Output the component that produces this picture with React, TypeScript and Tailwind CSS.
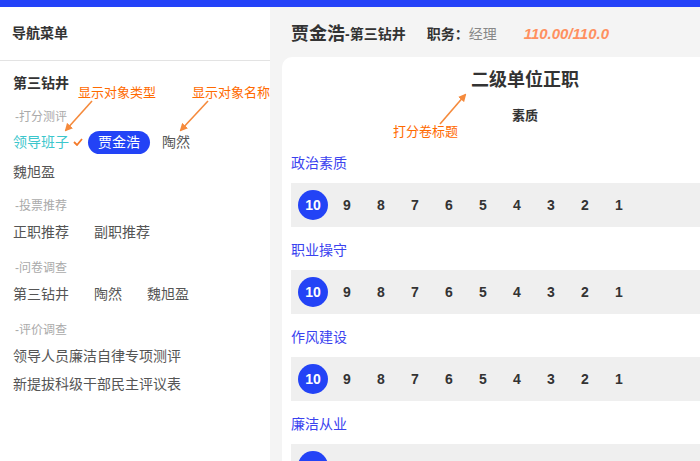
const font = { fontFamily: '"Liberation Sans", "Noto Sans CJK SC", sans-serif' };

const sections = ["政治素质", "职业操守", "作风建设", "廉洁从业"];
const scores = [10, 9, 8, 7, 6, 5, 4, 3, 2, 1];

function ScoreRow() {
  return (
    <div className="flex h-[44px] items-center gap-[4px] bg-[#efefef] pl-[7px]">
      {scores.map((n) =>
        n === 10 ? (
          <span
            key={n}
            className="flex h-[30px] w-[30px] items-center justify-center rounded-full bg-[#2343f6] text-[14px] font-bold text-white"
          >
            {n}
          </span>
        ) : (
          <span key={n} className="flex h-[30px] w-[30px] items-center justify-center text-[14px] font-bold text-[#333]">
            {n}
          </span>
        )
      )}
    </div>
  );
}

function Group({ title, items, first }: { title: string; items: string[]; first?: boolean }) {
  return (
    <>
      <div className={`${first ? "mt-[14px]" : "mt-[16px]"} pl-[2px] text-[12px] leading-[20px] text-[#aaa]`}>-{title}</div>
      <div className="mt-[6px] flex gap-[25px] text-[14px] leading-[20px] text-[#555]">
        {items.map((t) => (
          <span key={t}>{t}</span>
        ))}
      </div>
    </>
  );
}

function Sidebar() {
  return (
    <aside className="w-[270px] shrink-0 bg-white">
      <div className="flex h-[54px] items-center border-b border-[#e3e3e3] px-[12px] text-[14px] font-bold text-[#333]">
        导航菜单
      </div>
      <div className="px-[13px]">
        <div className="mt-[12px] text-[14px] font-bold leading-[20px] text-[#333]">第三钻井</div>
        <div className="mt-[14px] pl-[2px] text-[12px] leading-[20px] text-[#aaa]">-打分测评</div>
        <div className="mt-[3px] flex h-[24px] items-center text-[14px]">
          <span className="text-[#3cc6cc]">领导班子</span>
          <svg width="10" height="8" viewBox="0 0 10 8" className="ml-[4px]">
            <polyline points="1,4 4,7 9,1" fill="none" stroke="#f47a2a" strokeWidth="1.8" />
          </svg>
          <span className="ml-[5px] flex h-[23px] items-center rounded-full bg-[#2343f6] px-[10px] text-white">贾金浩</span>
          <span className="ml-[12px] text-[#555]">陶然</span>
        </div>
        <div className="mt-[8px] text-[14px] leading-[20px] text-[#555]">魏旭盈</div>
        <Group title="投票推荐" items={["正职推荐", "副职推荐"]} first />
        <Group title="问卷调查" items={["第三钻井", "陶然", "魏旭盈"]} />
        <div className="mt-[16px] pl-[2px] text-[12px] leading-[20px] text-[#aaa]">-评价调查</div>
        <div className="mt-[6px] text-[14px] leading-[20px] text-[#555]">领导人员廉洁自律专项测评</div>
        <div className="mt-[8px] text-[14px] leading-[20px] text-[#555]">新提拔科级干部民主评议表</div>
      </div>
    </aside>
  );
}

function Main() {
  return (
    <main className="min-w-0 flex-1 bg-[#f4f4f4]">
      <div className="flex h-[50px] items-center whitespace-nowrap pl-[21px] pt-[4px] text-[#333]">
        <span className="text-[18px] font-bold">贾金浩</span>
        <span className="text-[14px] font-bold">-第三钻井</span>
        <span className="ml-[21px] text-[14px] font-bold">职务：</span>
        <span className="text-[14px] text-[#888]">经理</span>
        <span className="ml-[27px] text-[15px] font-bold italic text-[#ff9060]">110.00/110.0</span>
      </div>
      <div className="ml-[12px] w-[486px] rounded-tl-[10px] bg-white px-[9px] pt-[10px]">
        <div className="text-center text-[18px] font-bold leading-[26px] text-[#333]">二级单位正职</div>
        <div className="mt-[13px] text-center text-[13px] font-bold leading-[20px] text-[#333]">素质</div>
        <div className="mt-[27px] flex flex-col">
          {sections.map((s) => (
            <div key={s} className="mb-[13px]">
              <div className="mb-[10px] text-[14px] leading-[20px] text-[#3a42ef]">{s}</div>
              <ScoreRow />
            </div>
          ))}
        </div>
      </div>
    </main>
  );
}

function Annotations() {
  return (
    <>
      <span className="absolute left-[78px] top-[84px] text-[13px] leading-[18px] text-[#ff6a00]">显示对象类型</span>
      <span className="absolute left-[192px] top-[84px] text-[13px] leading-[18px] text-[#ff6a00]">显示对象名称</span>
      <span className="absolute left-[393px] top-[123px] text-[13px] leading-[18px] text-[#ff6a00]">打分卷标题</span>
      <svg className="pointer-events-none absolute left-0 top-0" width="700" height="461">
        <defs>
          <marker id="ah" markerWidth="8" markerHeight="8" refX="6" refY="4" orient="auto" markerUnits="userSpaceOnUse">
            <path d="M0,0 L8,4 L0,8 Z" fill="#f58a3c" />
          </marker>
        </defs>
        <g stroke="#f58a3c" strokeWidth="1.6" fill="none">
          <line x1="92" y1="101" x2="66" y2="130" markerEnd="url(#ah)" />
          <line x1="208" y1="101" x2="181" y2="130" markerEnd="url(#ah)" />
          <line x1="440" y1="124" x2="465" y2="95" markerEnd="url(#ah)" />
        </g>
      </svg>
    </>
  );
}

export default function App() {
  return (
    <div className="relative flex h-[461px] w-[700px] flex-col overflow-hidden bg-white" style={font}>
      <div className="h-[7px] shrink-0 bg-[#2442f8]" />
      <div className="flex min-h-0 flex-1">
        <Sidebar />
        <Main />
      </div>
      <Annotations />
    </div>
  );
}
